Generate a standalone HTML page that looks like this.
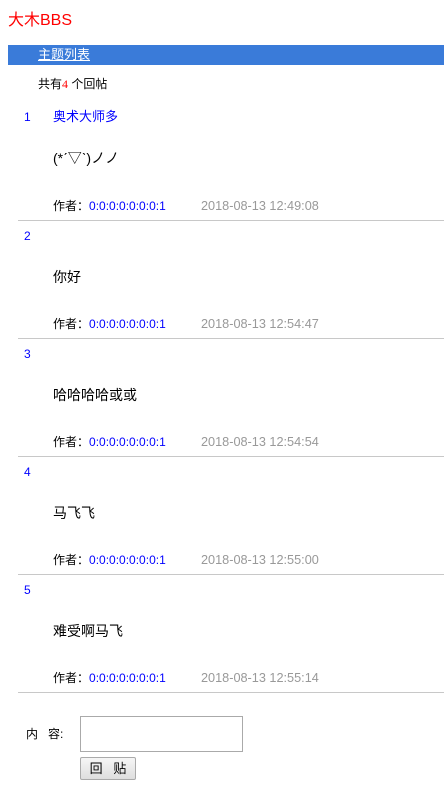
<!DOCTYPE html>
<html><head><meta charset="utf-8"><style>
body{margin:0;width:444px;height:809px;background:#fff;font-family:"Liberation Sans","Noto Sans CJK SC",sans-serif;position:relative;overflow:hidden}
.a{position:absolute;white-space:nowrap;line-height:1}
.t{left:8px;top:13px;font-size:16px;color:#f00}
.bar{position:absolute;left:8px;top:45px;width:436px;height:20px;background:#3a7bd9}
.bar span{position:absolute;left:30px;top:3px;font-size:13px;color:#fff;text-decoration:underline;line-height:1}
.n{left:24px;font-size:12px;color:#00f}
.c{left:53px;font-size:14px;color:#000}
.au{left:53px;font-size:12px;color:#000}
.au b{font-weight:normal;color:#00f}
.d{left:201px;font-size:12.7px;color:#999}
.hr{position:absolute;left:18px;width:426px;height:1px;background:#c8c8c8}
</style></head><body>
<div class="a t">大木BBS</div>
<div class="bar"><span>主题列表</span></div>
<div class="a" style="left:38px;top:78px;font-size:12px">共有<span style="color:#f00;font-family:'Liberation Serif',serif">4</span> 个回帖</div>

<div class="a n" style="top:111px">1</div>
<div class="a" style="left:53px;top:110px;font-size:13px;color:#00f">奥术大师多</div>
<div class="a c" style="top:151px">(*ˊ▽ˋ)ノノ</div>
<div class="a au" style="top:200px">作者：<b>0:0:0:0:0:0:0:1</b></div>
<div class="a d" style="top:200px">2018-08-13 12:49:08</div>
<div class="hr" style="top:220px"></div>

<div class="a n" style="top:230px">2</div>
<div class="a c" style="top:270px">你好</div>
<div class="a au" style="top:318px">作者：<b>0:0:0:0:0:0:0:1</b></div>
<div class="a d" style="top:318px">2018-08-13 12:54:47</div>
<div class="hr" style="top:338px"></div>

<div class="a n" style="top:348px">3</div>
<div class="a c" style="top:388px">哈哈哈哈或或</div>
<div class="a au" style="top:436px">作者：<b>0:0:0:0:0:0:0:1</b></div>
<div class="a d" style="top:436px">2018-08-13 12:54:54</div>
<div class="hr" style="top:456px"></div>

<div class="a n" style="top:466px">4</div>
<div class="a c" style="top:506px">马飞飞</div>
<div class="a au" style="top:554px">作者：<b>0:0:0:0:0:0:0:1</b></div>
<div class="a d" style="top:554px">2018-08-13 12:55:00</div>
<div class="hr" style="top:574px"></div>

<div class="a n" style="top:584px">5</div>
<div class="a c" style="top:624px">难受啊马飞</div>
<div class="a au" style="top:672px">作者：<b>0:0:0:0:0:0:0:1</b></div>
<div class="a d" style="top:672px">2018-08-13 12:55:14</div>
<div class="hr" style="top:692px"></div>

<div class="a" style="left:26px;top:728px;font-size:12px">内&nbsp;&nbsp;&nbsp;容:</div>
<div style="position:absolute;left:80px;top:716px;width:161px;height:34px;border:1px solid #aaa"></div>
<div style="position:absolute;left:80px;top:757px;width:54px;height:21px;border:1px solid #aaa;border-radius:2px;background:linear-gradient(#f6f6f6,#dedede);font-size:13px;line-height:21px;text-align:center">回&nbsp;&nbsp;&nbsp;贴</div>
</body></html>
